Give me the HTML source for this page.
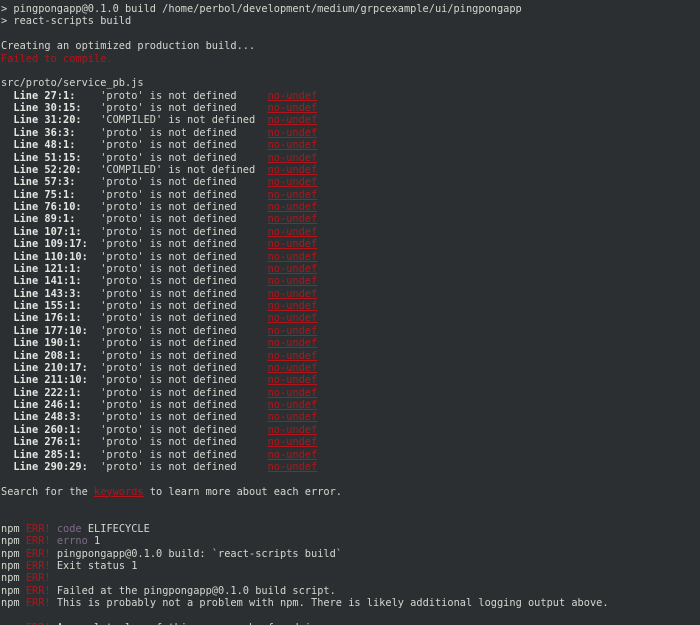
<!DOCTYPE html>
<html><head><style>
html,body{margin:0;padding:0;background:#2c2f31;width:700px;height:625px;overflow:hidden}
pre{margin:0;padding:3px 0 0 1px;font-family:"DejaVu Sans Mono","Liberation Mono",monospace;font-size:10.3px;line-height:12.37px;color:#d3d7cf}
b{font-weight:bold;color:#e4e6e2}
.r{color:#b3141a}
.u{color:#b3141a;text-decoration:underline}
.p{color:#7c6a88}
</style></head><body><pre>&gt; pingpongapp@0.1.0 build /home/perbol/development/medium/grpcexample/ui/pingpongapp
&gt; react-scripts build

Creating an optimized production build...
<span class="r">Failed to compile.</span>

src/proto/service_pb.js
  <b>Line 27:1:</b>    'proto' is not defined     <span class="u">no-undef</span>
  <b>Line 30:15:</b>   'proto' is not defined     <span class="u">no-undef</span>
  <b>Line 31:20:</b>   'COMPILED' is not defined  <span class="u">no-undef</span>
  <b>Line 36:3:</b>    'proto' is not defined     <span class="u">no-undef</span>
  <b>Line 48:1:</b>    'proto' is not defined     <span class="u">no-undef</span>
  <b>Line 51:15:</b>   'proto' is not defined     <span class="u">no-undef</span>
  <b>Line 52:20:</b>   'COMPILED' is not defined  <span class="u">no-undef</span>
  <b>Line 57:3:</b>    'proto' is not defined     <span class="u">no-undef</span>
  <b>Line 75:1:</b>    'proto' is not defined     <span class="u">no-undef</span>
  <b>Line 76:10:</b>   'proto' is not defined     <span class="u">no-undef</span>
  <b>Line 89:1:</b>    'proto' is not defined     <span class="u">no-undef</span>
  <b>Line 107:1:</b>   'proto' is not defined     <span class="u">no-undef</span>
  <b>Line 109:17:</b>  'proto' is not defined     <span class="u">no-undef</span>
  <b>Line 110:10:</b>  'proto' is not defined     <span class="u">no-undef</span>
  <b>Line 121:1:</b>   'proto' is not defined     <span class="u">no-undef</span>
  <b>Line 141:1:</b>   'proto' is not defined     <span class="u">no-undef</span>
  <b>Line 143:3:</b>   'proto' is not defined     <span class="u">no-undef</span>
  <b>Line 155:1:</b>   'proto' is not defined     <span class="u">no-undef</span>
  <b>Line 176:1:</b>   'proto' is not defined     <span class="u">no-undef</span>
  <b>Line 177:10:</b>  'proto' is not defined     <span class="u">no-undef</span>
  <b>Line 190:1:</b>   'proto' is not defined     <span class="u">no-undef</span>
  <b>Line 208:1:</b>   'proto' is not defined     <span class="u">no-undef</span>
  <b>Line 210:17:</b>  'proto' is not defined     <span class="u">no-undef</span>
  <b>Line 211:10:</b>  'proto' is not defined     <span class="u">no-undef</span>
  <b>Line 222:1:</b>   'proto' is not defined     <span class="u">no-undef</span>
  <b>Line 246:1:</b>   'proto' is not defined     <span class="u">no-undef</span>
  <b>Line 248:3:</b>   'proto' is not defined     <span class="u">no-undef</span>
  <b>Line 260:1:</b>   'proto' is not defined     <span class="u">no-undef</span>
  <b>Line 276:1:</b>   'proto' is not defined     <span class="u">no-undef</span>
  <b>Line 285:1:</b>   'proto' is not defined     <span class="u">no-undef</span>
  <b>Line 290:29:</b>  'proto' is not defined     <span class="u">no-undef</span>

Search for the <span class="u">keywords</span> to learn more about each error.


npm <span class="r">ERR!</span> <span class="p">code</span> ELIFECYCLE
npm <span class="r">ERR!</span> <span class="p">errno</span> 1
npm <span class="r">ERR!</span> pingpongapp@0.1.0 build: `react-scripts build`
npm <span class="r">ERR!</span> Exit status 1
npm <span class="r">ERR!</span>
npm <span class="r">ERR!</span> Failed at the pingpongapp@0.1.0 build script.
npm <span class="r">ERR!</span> This is probably not a problem with npm. There is likely additional logging output above.

npm <span class="r">ERR!</span> A complete log of this run can be found in:
</pre></body></html>
